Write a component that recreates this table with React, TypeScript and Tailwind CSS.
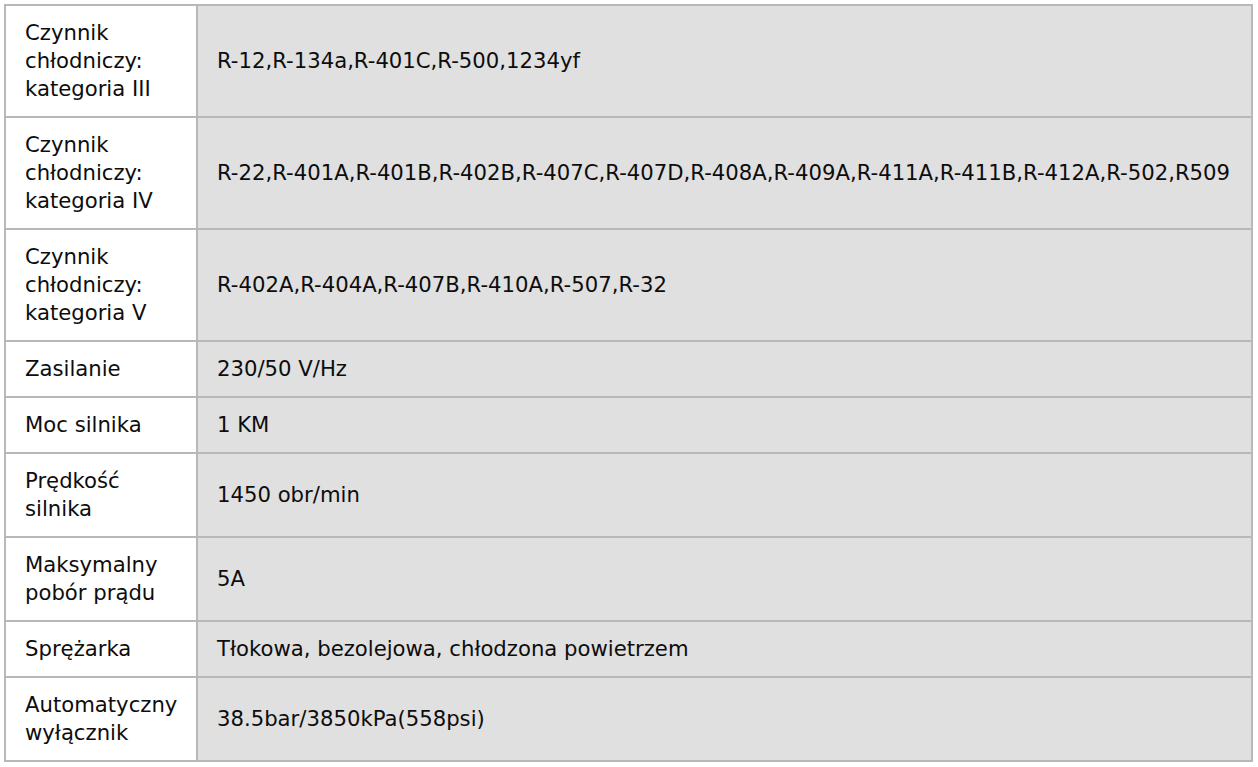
import React from "react";

const rows: [string[], string][] = [
  [["Czynnik", "chłodniczy:", "kategoria III"], "R-12,R-134a,R-401C,R-500,1234yf"],
  [["Czynnik", "chłodniczy:", "kategoria IV"], "R-22,R-401A,R-401B,R-402B,R-407C,R-407D,R-408A,R-409A,R-411A,R-411B,R-412A,R-502,R509"],
  [["Czynnik", "chłodniczy:", "kategoria V"], "R-402A,R-404A,R-407B,R-410A,R-507,R-32"],
  [["Zasilanie"], "230/50 V/Hz"],
  [["Moc silnika"], "1 KM"],
  [["Prędkość", "silnika"], "1450 obr/min"],
  [["Maksymalny", "pobór prądu"], "5A"],
  [["Sprężarka"], "Tłokowa, bezolejowa, chłodzona powietrzem"],
  [["Automatyczny", "wyłącznik"], "38.5bar/3850kPa(558psi)"],
];

export default function App() {
  return (
    <div className="w-[1258px] h-[767px] bg-white pt-[4px] pl-[4px]" style={{ fontFamily: '"DejaVu Sans", sans-serif' }}>
      <table className="w-[1249px] border-collapse text-[21.2px] leading-[28px] text-[#0d0d0d] whitespace-nowrap">
        <tbody>
          {rows.map(([label, value], i) => (
            <tr key={i}>
              <td className="w-[192px] border-2 border-[#b8b8b8] bg-white pl-[19px] pr-0 py-[13px] align-middle">
                {label.map((l, j) => (
                  <div key={j}>{l}</div>
                ))}
              </td>
              <td className="border-2 border-[#b8b8b8] bg-[#e0e0e0] pl-[19px] pr-0 py-[13px] align-middle">
                {value}
              </td>
            </tr>
          ))}
        </tbody>
      </table>
    </div>
  );
}
